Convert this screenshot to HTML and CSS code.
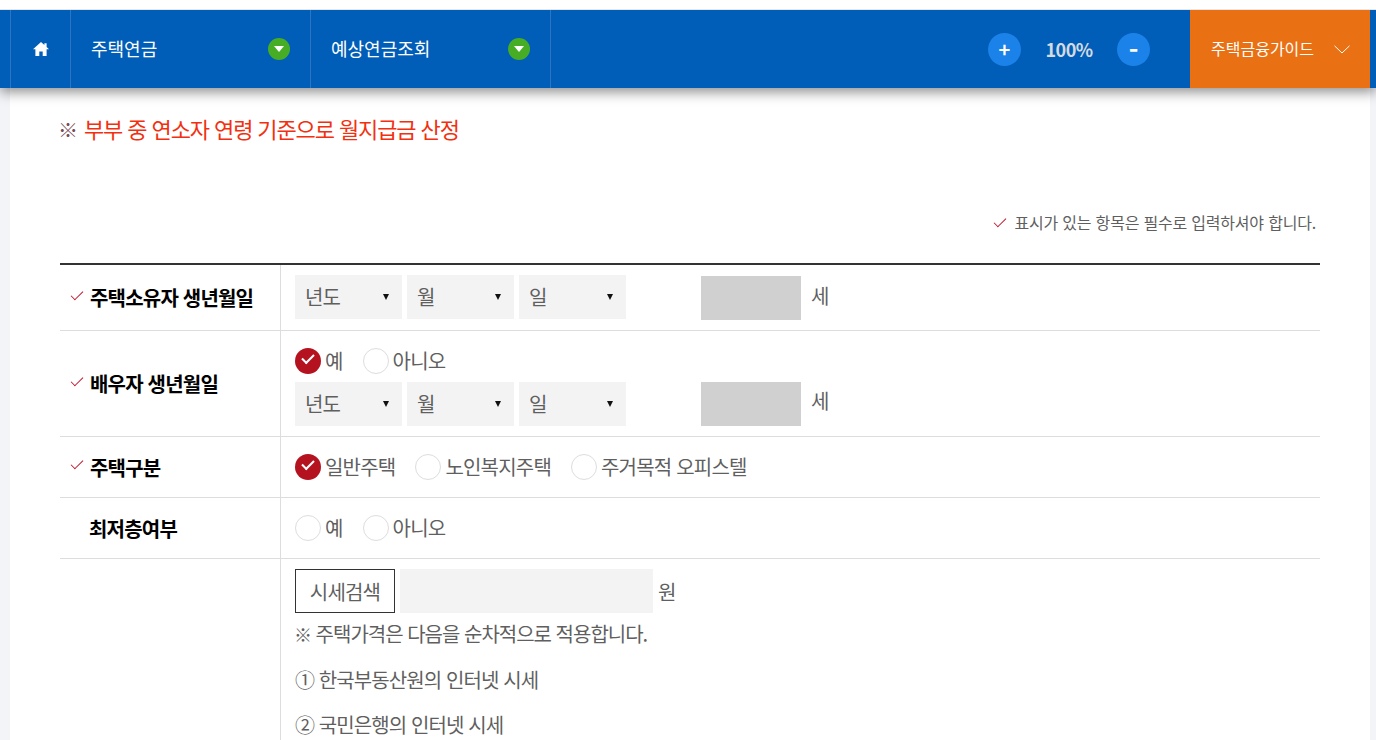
FILE: index.html
```html
<!DOCTYPE html>
<html lang="ko">
<head>
  <meta charset="UTF-8">
  <title>예상연금조회</title>
  <link rel="stylesheet" href="styles.css">
</head>
<body>

  <div class="top-strip"></div>

  <nav class="nav">
    <a class="nav-home" href="#" title="홈">
      <svg width="18" height="16" viewBox="0 0 18 16"><path d="M9 1 1 8.2h2.4V15h3.9v-4.4h3.4V15h3.9V8.2H17L14.6 6V2.2h-2.2v1.8z" fill="#fff"/></svg>
    </a>
    <a class="nav-menu" href="#"><span>주택연금</span><i class="nav-arrow"></i></a>
    <a class="nav-menu" href="#"><span>예상연금조회</span><i class="nav-arrow"></i></a>
    <div class="zoom">
      <button class="zoom-btn">+</button>
      <span class="zoom-val">100%</span>
      <button class="zoom-btn zoom-minus">-</button>
    </div>
    <a class="nav-guide" href="#">
      <span>주택금융가이드</span>
      <svg width="16" height="9" viewBox="0 0 16 9"><path d="M.5.8 8 8 15.5.8" fill="none" stroke="#fff"/></svg>
    </a>
  </nav>

  <main class="content">
    <h2 class="notice"><span class="notice-mark">※</span> 부부 중 연소자 연령 기준으로 월지급금 산정</h2>

    <p class="required-note"><i class="check"></i>표시가 있는 항목은 필수로 입력하셔야 합니다.</p>

    <div class="form-table">
      <div class="row row-first">
        <div class="label"><i class="check"></i>주택소유자 생년월일</div>
        <div class="field">
          <div class="date-line">
            <div class="sel"><select><option>년도</option></select></div>
            <div class="sel"><select><option>월</option></select></div>
            <div class="sel"><select><option>일</option></select></div>
            <div class="age-box"></div>
            <span class="age-unit">세</span>
          </div>
        </div>
      </div>

      <div class="row row-spouse">
        <div class="label"><i class="check"></i>배우자 생년월일</div>
        <div class="field">
          <div class="radios">
            <label class="radio on">예</label>
            <label class="radio">아니오</label>
          </div>
          <div class="date-line">
            <div class="sel"><select><option>년도</option></select></div>
            <div class="sel"><select><option>월</option></select></div>
            <div class="sel"><select><option>일</option></select></div>
            <div class="age-box"></div>
            <span class="age-unit">세</span>
          </div>
        </div>
      </div>

      <div class="row row-radio">
        <div class="label"><i class="check"></i>주택구분</div>
        <div class="field">
          <div class="radios">
            <label class="radio on">일반주택</label>
            <label class="radio">노인복지주택</label>
            <label class="radio">주거목적 오피스텔</label>
          </div>
        </div>
      </div>

      <div class="row row-radio">
        <div class="label">최저층여부</div>
        <div class="field">
          <div class="radios">
            <label class="radio">예</label>
            <label class="radio">아니오</label>
          </div>
        </div>
      </div>

      <div class="row row-price">
        <div class="label"></div>
        <div class="field">
          <div class="price-line">
            <button class="price-btn">시세검색</button>
            <input class="price-input" type="text">
            <span class="price-unit">원</span>
          </div>
          <p class="price-head"><span class="price-mark">※</span> 주택가격은 다음을 순차적으로 적용합니다.</p>
          <p class="price-item">① 한국부동산원의 인터넷 시세</p>
          <p class="price-item">② 국민은행의 인터넷 시세</p>
        </div>
      </div>
    </div>
  </main>

</body>
</html>
```

FILE: styles.css
```css
*, *::before, *::after { box-sizing: border-box; margin: 0; padding: 0; }

body {
  font-family: "Noto Sans CJK KR", "Noto Sans", sans-serif;
  background: #f3f4f8;
  color: #5f5f5f;
}

a { text-decoration: none; color: inherit; }

.top-strip {
  height: 10px;
  background: #fff;
  border-bottom: 1px solid #e6e6e6;
  position: relative;
  z-index: 11;
}

/* top nav */
.nav {
  display: flex;
  height: 78px;
  padding: 0 6px 0 10px;
  background: #005eb8;
  color: #fff;
  box-shadow: 0 4px 12px rgba(0,0,0,0.45);
  position: relative;
  z-index: 10;
}

.nav-home {
  width: 61px;
  display: flex;
  align-items: center;
  justify-content: center;
  border-left: 1px solid #2a76c2;
  border-right: 1px solid #2a76c2;
}

.nav-menu {
  width: 240px;
  display: flex;
  align-items: center;
  justify-content: space-between;
  padding: 0 20px;
  border-right: 1px solid #2a76c2;
  font-size: 18px;
}

.nav-menu span { padding-bottom: 2px; }

.nav-arrow {
  width: 22px;
  height: 22px;
  border-radius: 50%;
  background: #47ad24;
  display: flex;
  align-items: center;
  justify-content: center;
}

.nav-arrow::after {
  content: "";
  border-top: 6px solid #fff;
  border-left: 5px solid transparent;
  border-right: 5px solid transparent;
}

.zoom {
  margin-left: auto;
  display: flex;
  align-items: center;
  padding-right: 40px;
}

.zoom-btn {
  width: 33px;
  height: 33px;
  border: none;
  border-radius: 50%;
  background: #1a82e8;
  color: #fff;
  font-family: inherit;
  font-size: 20px;
  font-weight: 700;
  line-height: 30px;
}

.zoom-minus { font-size: 26px; }

.zoom-val {
  width: 96px;
  text-align: center;
  font-size: 18px;
  font-weight: 700;
  color: #d5dae0;
  letter-spacing: -0.6px;
}

.nav-guide {
  width: 180px;
  display: flex;
  align-items: center;
  justify-content: space-between;
  padding: 0 20px 0 21px;
  background: #e97013;
  font-size: 16px;
}

.nav-guide span { padding-bottom: 2px; }

/* content */
.content {
  width: 1360px;
  margin-left: 10px;
  height: 652px;
  padding: 0 50px;
  background: #fff;
}

.notice {
  padding-top: 24px;
  font-size: 22px;
  line-height: 32px;
  font-weight: 400;
  color: #f2300f;
  letter-spacing: -1.1px;
}

.notice-mark {
  font-size: 20px;
  font-weight: 300;
  color: #7a4a55;
  margin-left: -2px;
  margin-right: 2px;
}

.required-note {
  margin-top: 66px;
  padding-right: 4px;
  text-align: right;
  font-size: 16px;
  line-height: 20px;
  letter-spacing: -0.2px;
}

.check {
  display: inline-block;
  width: 12px;
  height: 6px;
  margin: 0 8px 5px 0;
  border-left: 1px solid #c0142a;
  border-bottom: 1px solid #c0142a;
  transform: rotate(-45deg);
}

.form-table {
  margin-top: 31px;
  border-top: 2px solid #333;
}

.row {
  display: flex;
  border-bottom: 1px solid #ddd;
}

.label {
  width: 221px;
  flex-shrink: 0;
  display: flex;
  align-items: center;
  padding-left: 29px;
  border-right: 1px solid #ddd;
  font-size: 20px;
  font-weight: 700;
  color: #000;
  letter-spacing: -0.8px;
}

.label .check {
  margin-left: -18px;
  margin-right: 7px;
  margin-bottom: 8px;
}

.field {
  flex: 1;
  padding-left: 14px;
  font-size: 20px;
  letter-spacing: -0.8px;
}

.row-first { height: 66px; }
.row-first .field { padding-top: 10px; }
.row-first .age-unit { line-height: 42px; }
.row-spouse { height: 106px; }
.row-spouse .field { padding-top: 17px; }
.row-spouse .date-line { margin-top: 8px; }
.row-spouse .age-box { margin-top: 0; }
.row-spouse .age-unit { line-height: 38px; }
.row-radio { height: 61px; }
.row-radio .field { padding-top: 17px; }

.date-line {
  display: flex;
  align-items: flex-start;
}

.sel {
  position: relative;
  width: 107px;
  height: 44px;
  margin-right: 5px;
  background: #f3f3f3;
}

.sel::after {
  content: "";
  position: absolute;
  right: 13px;
  top: 19px;
  border-top: 6px solid #111;
  border-left: 3px solid transparent;
  border-right: 3px solid transparent;
}

.sel select {
  appearance: none;
  width: 100%;
  height: 100%;
  padding: 0 0 2px 10px;
  border: none;
  background: transparent;
  font-family: inherit;
  font-size: 20px;
  letter-spacing: -0.8px;
  color: #5f5f5f;
}

.age-box {
  width: 100px;
  height: 44px;
  margin: 1px 0 0 70px;
  background: #d0d0d0;
}

.age-unit {
  margin-left: 10px;
}

.radios {
  display: flex;
  gap: 20px;
  height: 26px;
}

.radio {
  position: relative;
  display: flex;
  align-items: center;
  line-height: 26px;
}

.radio::before {
  content: "";
  width: 26px;
  height: 26px;
  margin-right: 4px;
  border: 1px solid #ddd;
  border-radius: 50%;
  background: #fff;
}

.radio.on::before {
  border: none;
  background: #b5121f;
}

.radio.on::after {
  content: "";
  position: absolute;
  left: 7px;
  top: 6px;
  width: 12px;
  height: 7px;
  border-left: 2px solid #fff;
  border-bottom: 2px solid #fff;
  transform: rotate(-45deg);
}

.row-price { height: 181px; border-bottom: none; }
.row-price .field { padding-top: 10px; }

.price-line {
  display: flex;
  align-items: center;
}

.price-btn {
  width: 100px;
  height: 44px;
  border: 1px solid #333;
  background: #fff;
  font-family: inherit;
  font-size: 20px;
  letter-spacing: -0.8px;
  color: #5f5f5f;
}

.price-input {
  width: 253px;
  height: 44px;
  margin-left: 5px;
  border: none;
  background: #f3f3f3;
}

.price-unit { margin-left: 5px; }

.price-head {
  margin-top: 7px;
  line-height: 28px;
  letter-spacing: -1px;
}

.price-mark {
  font-size: 18px;
  margin-left: -1px;
}

.price-item {
  margin-top: 18px;
  line-height: 28px;
  letter-spacing: -0.9px;
}

.price-item + .price-item { margin-top: 17px; }
```
